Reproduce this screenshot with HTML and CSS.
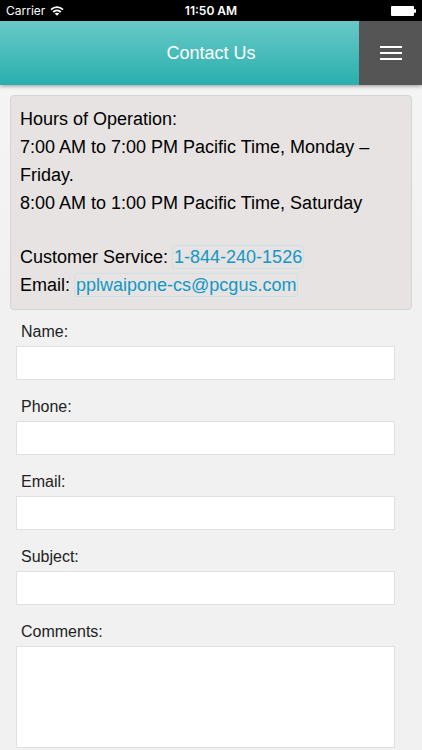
FILE: index.html
```html
<!DOCTYPE html>
<html lang="en">
<head>
<meta charset="UTF-8">
<meta name="viewport" content="width=device-width, initial-scale=1.0">
<title>Contact Us</title>
<link rel="stylesheet" href="styles.css">
</head>
<body>
  <div class="status-bar">
    <div class="carrier">
      <span>Carrier</span>
      <svg class="wifi" width="14" height="10" viewBox="0 0 14 10" fill="none" stroke="#fff" stroke-width="1.8">
        <path d="M1 3.7C4.4 .3 9.6 .3 13 3.7" />
        <path d="M3.2 6C5.4 3.9 8.6 3.9 10.8 6" />
        <path d="M7 9.8L4.7 7.5C6.1 6.4 7.9 6.4 9.3 7.5Z" fill="#fff" stroke="none" />
      </svg>
    </div>
    <span class="time">11:50 AM</span>
    <svg class="battery" width="25" height="10" viewBox="0 0 25 10" fill="#fff">
      <rect x="0" y="0" width="23" height="10" rx="1" />
      <rect x="23" y="3" width="2" height="4" rx="1" />
    </svg>
  </div>

  <header class="header">
    <h1>Contact Us</h1>
    <button type="button" class="menu-btn" aria-label="Menu">
      <svg width="22" height="16" viewBox="0 0 22 16" fill="#fff">
        <rect y="1" width="22" height="2" />
        <rect y="7" width="22" height="2" />
        <rect y="13" width="22" height="2" />
      </svg>
    </button>
  </header>

  <main>
    <section class="info">
      <p>Hours of Operation:<br>
      7:00 AM to 7:00 PM Pacific Time, Monday – Friday.<br>
      8:00 AM to 1:00 PM Pacific Time, Saturday</p>
      <p>Customer Service: <a href="tel:18442401526">1-844-240-1526</a><br>
      Email: <a href="mailto:pplwaipone-cs@pcgus.com">pplwaipone-cs@pcgus.com</a></p>
    </section>

    <form class="contact-form">
      <div class="field">
        <label for="name">Name:</label>
        <input type="text" id="name" name="name">
      </div>
      <div class="field">
        <label for="phone">Phone:</label>
        <input type="tel" id="phone" name="phone">
      </div>
      <div class="field">
        <label for="email">Email:</label>
        <input type="email" id="email" name="email">
      </div>
      <div class="field">
        <label for="subject">Subject:</label>
        <input type="text" id="subject" name="subject">
      </div>
      <div class="field">
        <label for="comments">Comments:</label>
        <textarea id="comments" name="comments"></textarea>
      </div>
    </form>
  </main>
</body>
</html>
```

FILE: styles.css
```css
* {
    box-sizing: border-box;
}

body {
    margin: 0;
    background: #f1f1f1 linear-gradient(#f6f6f6, #f1f1f1 300px) no-repeat;
    color: #000;
    font-family: "Liberation Sans", Arial, sans-serif;
}

/* status bar */
.status-bar {
    display: grid;
    grid-template-columns: 1fr auto 1fr;
    align-items: center;
    height: 21px;
    padding: 0 6px;
    background-color: #000;
    color: #fff;
    font-family: Inter, sans-serif;
    font-size: 12px;
}

.carrier {
    display: flex;
    align-items: center;
    gap: 5px;
}

.time {
    font-weight: 600;
}

.battery {
    justify-self: end;
}

/* header */
.header {
    display: grid;
    grid-template-columns: 63px 1fr 63px;
    height: 64px;
    background: linear-gradient(#68c9c8, #29afad);
    box-shadow: 0 1px 4px rgba(0, 0, 0, 0.4);
}

.header h1 {
    grid-column: 2;
    margin: 0;
    color: #fff;
    font-size: 18px;
    font-weight: normal;
    line-height: 64px;
    text-align: center;
}

.menu-btn {
    display: flex;
    align-items: center;
    justify-content: center;
    padding: 0;
    border: none;
    background-color: #555;
    cursor: pointer;
}

/* hours and contact details */
.info {
    margin: 10px;
    padding: 9px 9px 10px;
    border: 1px solid #d5d3d3;
    border-radius: 4px;
    background-color: #e7e3e2;
    font-size: 18px;
    line-height: 28px;
}

.info p {
    margin: 0;
}

.info p + p {
    margin-top: 26px;
}

.info a {
    padding: 1px;
    border-radius: 3px;
    box-shadow: 0 0 0 1px #cce1e6;
    color: #1198c6;
    text-decoration: none;
}

/* form */
.contact-form {
    padding: 0 27px 0 16px;
}

.field {
    margin-bottom: 15px;
}

.field:last-child {
    margin-bottom: 0;
}

.field label {
    display: block;
    padding: 0 5px 2px;
    color: #222;
    font-size: 16px;
    line-height: 24px;
}

.field input,
.field textarea {
    display: block;
    width: 100%;
    height: 34px;
    padding: 6px;
    border: 1px solid #e0e0e0;
    border-radius: 0;
    background-color: #fff;
    font-family: inherit;
    font-size: 16px;
}

.field textarea {
    height: 102px;
    resize: none;
}
```
